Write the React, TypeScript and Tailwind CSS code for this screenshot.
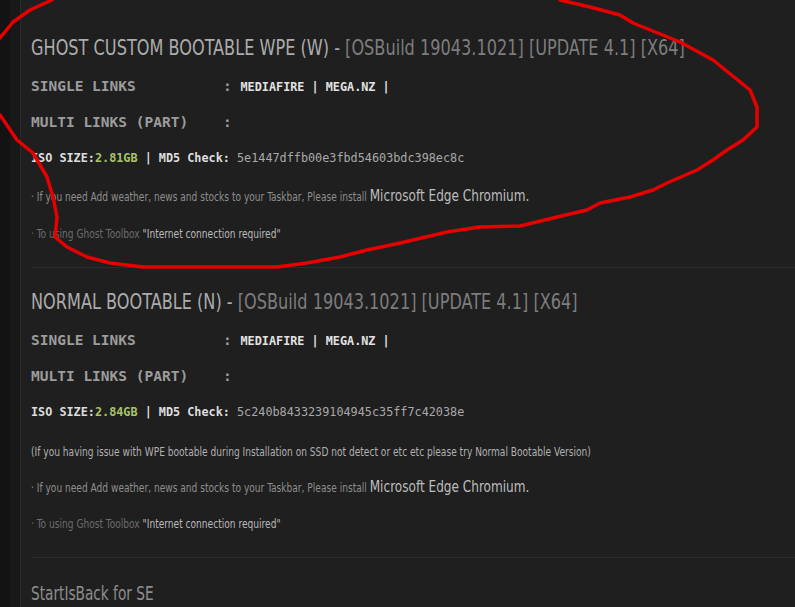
import React from "react";

const cond = { fontFamily: '"DejaVu Sans Condensed", "Liberation Sans Narrow", "Roboto", sans-serif' };
const mono = { fontFamily: '"DejaVu Sans Mono", "Liberation Mono", monospace' };

function LinkRows({ size, hash }: { size: string; hash: string }) {
  return (
    <>
      <div className="mt-[14px] h-[20px] leading-[20px] whitespace-pre text-[14.5px] font-bold text-[#9c9c9c]" style={mono}>
        {"SINGLE LINKS          : "}
        <span className="text-[11.8px] text-[#e2e2e2]">MEDIAFIRE | MEGA.NZ |</span>
      </div>
      <div className="mt-[16px] h-[20px] leading-[20px] whitespace-pre text-[14.5px] font-bold text-[#9c9c9c]" style={mono}>
        {"MULTI LINKS (PART)    :"}
      </div>
      <div className="mt-[18px] h-[16px] leading-[16px] whitespace-pre text-[11.8px]" style={mono}>
        <span className="font-bold text-[#dedede]">ISO SIZE:</span>
        <span className="font-bold text-[#a8c46a]">{size}</span>
        <span className="font-bold text-[#dedede]">{" | MD5 Check: "}</span>
        <span className="text-[#a9a9a9]">{hash}</span>
      </div>
    </>
  );
}

function EdgeLine({ mt }: { mt: string }) {
  return (
    <div className={`${mt} h-[20px] leading-[20px] whitespace-nowrap`} style={cond}>
      <span className="inline-block origin-left scale-x-[0.84] text-[12px] text-[#8e8e8e]">
        · If you need Add weather, news and stocks to your Taskbar, Please install{" "}
        <span className="text-[16px] text-[#bdbdbd]">Microsoft Edge Chromium.</span>
      </span>
    </div>
  );
}

function ToolboxLine({ mt }: { mt: string }) {
  return (
    <div className={`${mt} h-[20px] leading-[20px] whitespace-nowrap`} style={cond}>
      <span className="inline-block origin-left scale-x-[0.84] text-[12px] text-[#6c6c6c]">
        · To using Ghost Toolbox <span className="text-[#b9b9b9]">"Internet connection required"</span>
      </span>
    </div>
  );
}

function Heading({ main, rest, mt }: { main: string; rest?: string; mt: string }) {
  return (
    <div className={`${mt} h-[28px] leading-[28px] whitespace-nowrap`} style={cond}>
      <span className="inline-block origin-left scale-x-[0.854] text-[21px]">
        <span className="text-[#acacac]">{main}</span>
        {rest && <span className="text-[#7d7d7d]">{rest}</span>}
      </span>
    </div>
  );
}

export default function App() {
  return (
    <div className="relative w-[795px] h-[607px] overflow-hidden flex bg-[#1f1f1f]">
      <div className="w-[10px] shrink-0 bg-[#131313]" />
      <div className="w-[11px] shrink-0 bg-[#181818] border-r border-[#2a2a2a]" />
      <div className="flex-1 min-w-0 pl-[10px] pt-[34px] flex flex-col">
        <Heading mt="mt-0" main="GHOST CUSTOM BOOTABLE WPE (W) - " rest="[OSBuild 19043.1021] [UPDATE 4.1] [X64]" />
        <LinkRows size="2.81GB" hash="5e1447dffb00e3fbd54603bdc398ec8c" />
        <EdgeLine mt="mt-[20px]" />
        <ToolboxLine mt="mt-[17px]" />
        <div className="mt-[24px] border-t border-[#2c2c2c]" />
        <Heading mt="mt-[20px]" main="NORMAL BOOTABLE (N) - " rest="[OSBuild 19043.1021] [UPDATE 4.1] [X64]" />
        <LinkRows size="2.84GB" hash="5c240b8433239104945c35ff7c42038e" />
        <div className="mt-[21px] h-[20px] leading-[20px] whitespace-nowrap" style={cond}>
          <span className="inline-block origin-left scale-x-[0.84] text-[12px] text-[#b0b0b0]">
            (If you having issue with WPE bootable during Installation on SSD not detect or etc etc please try Normal Bootable Version)
          </span>
        </div>
        <EdgeLine mt="mt-[16px]" />
        <ToolboxLine mt="mt-[16px]" />
        <div className="mt-[24px] border-t border-[#2c2c2c]" />
        <div className="mt-[21px] h-[28px] leading-[28px] whitespace-nowrap" style={cond}>
          <span className="inline-block origin-left scale-x-[0.76] text-[20px] text-[#8e8e8e]">StartIsBack for SE</span>
        </div>
      </div>
      <svg className="absolute inset-0 pointer-events-none" width="795" height="607" viewBox="0 0 795 607">
        <path d="M52,0 L30,10 L13,22 L0,38" fill="none" stroke="#e60000" strokeWidth="3.5" strokeLinecap="round" strokeLinejoin="round" />
        <path
          d="M0,115 L17,140 L33,153 L47,177 L53,197 L57,217 L55,237 L67,247 L87,257 L110,263 L143,267 L187,267 L233,267 L277,267 L307,263 L340,257 L367,250 L400,243 L413,240 L447,232 L480,227 L520,226 L553,218 L587,210 L600,203 L630,197 L653,190 L667,183 L697,170 L713,160 L727,150 L743,140 L757,127 L757,107 L750,90 L713,60 L680,42 L633,23 L620,15 L590,7 L560,0"
          fill="none"
          stroke="#e60000"
          strokeWidth="3.5"
          strokeLinecap="round"
          strokeLinejoin="round"
        />
      </svg>
    </div>
  );
}
